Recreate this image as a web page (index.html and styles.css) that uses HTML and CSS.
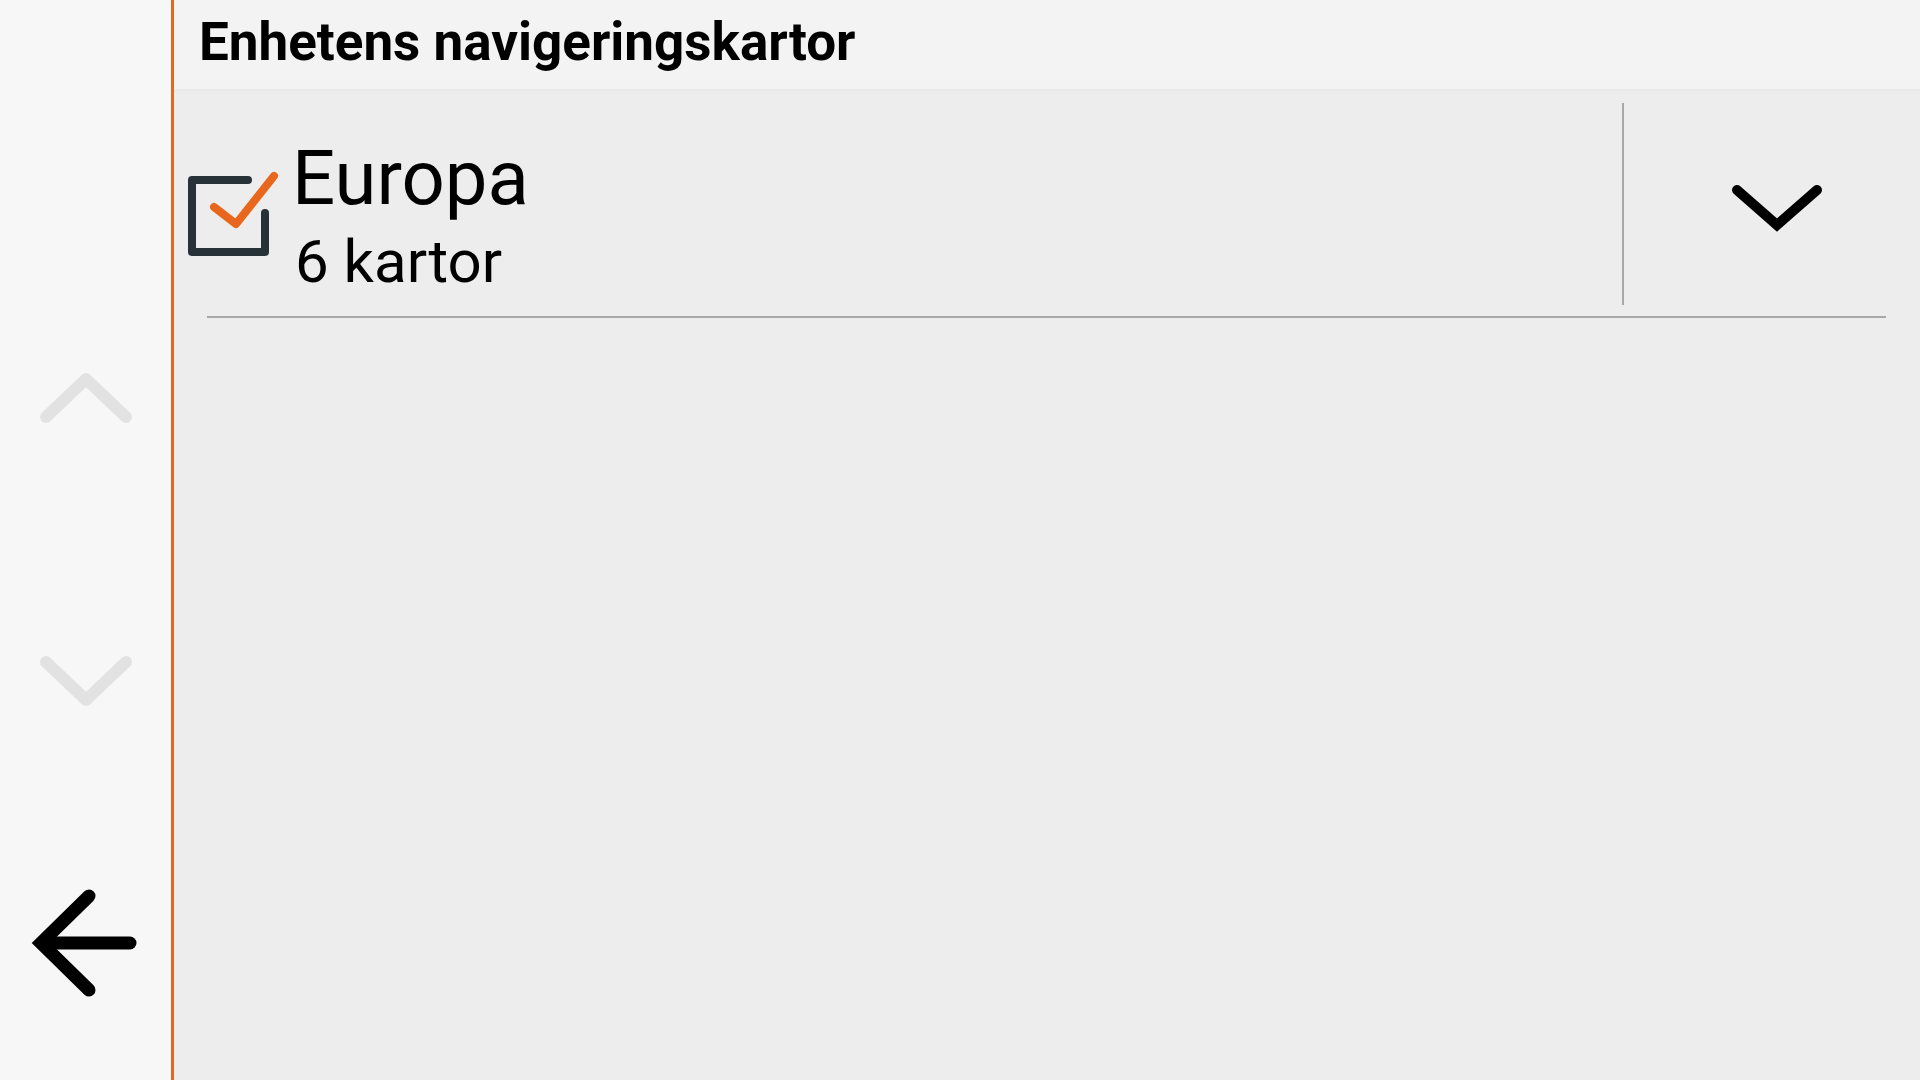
FILE: index.html
```html
<!DOCTYPE html>
<html lang="sv">
<head>
  <meta charset="UTF-8">
  <title>Enhetens navigeringskartor</title>
  <link rel="stylesheet" href="styles.css">
</head>
<body>

<div class="sidebar">
  <div class="side-btn up">
    <svg width="110" height="70" viewBox="0 0 110 70">
      <polyline points="15,54 55,16 95,54" fill="none" stroke="#e2e2e2" stroke-width="12" stroke-linecap="round" stroke-linejoin="round"/>
    </svg>
  </div>
  <div class="side-btn down">
    <svg width="110" height="70" viewBox="0 0 110 70">
      <polyline points="15,16 55,54 95,16" fill="none" stroke="#e2e2e2" stroke-width="12" stroke-linecap="round" stroke-linejoin="round"/>
    </svg>
  </div>
  <div class="side-btn back">
    <svg width="120" height="120" viewBox="0 0 120 120">
      <polyline points="63,12 15,59 63,106" fill="none" stroke="#000" stroke-width="13" stroke-linecap="round" stroke-linejoin="miter"/>
      <line x1="18" y1="59" x2="104" y2="59" stroke="#000" stroke-width="13" stroke-linecap="round"/>
    </svg>
  </div>
</div>

<div class="main">
  <div class="header">Enhetens navigeringskartor</div>

  <div class="list">
    <div class="row">
      <svg class="check" width="94" height="94" viewBox="0 0 94 94">
        <polyline points="61,11 5,11 5,83 78,83 78,44" fill="none" stroke="#263238" stroke-width="8" stroke-linecap="round" stroke-linejoin="round"/>
        <polyline points="27,38 49,55 87,7" fill="none" stroke="#e8671c" stroke-width="8" stroke-linecap="round" stroke-linejoin="round"/>
      </svg>
      <div class="texts">
        <div class="name">Europa</div>
        <div class="count">6 kartor</div>
      </div>
      <div class="divider"></div>
      <div class="expand">
        <svg width="100" height="66" viewBox="0 0 100 66">
          <polyline points="10,12 50,47 90,12" fill="none" stroke="#000" stroke-width="10" stroke-linecap="round" stroke-linejoin="miter"/>
        </svg>
      </div>
    </div>
    <div class="row-line"></div>
  </div>
</div>

</body>
</html>
```

FILE: styles.css
```css
body {
  margin: 0;
  padding: 0;
  display: flex;
  height: 100vh;
  overflow: hidden;
  font-family: Roboto, "Noto Sans", sans-serif;
  color: #000;
  background: #ededed;
}

.sidebar {
  width: 171px;
  flex-shrink: 0;
  background: #f7f7f7;
  border-right: 3px solid #e4681f;
  display: flex;
  flex-direction: column;
  align-items: center;
}

.side-btn {
  width: 100%;
  height: 120px;
  display: flex;
  justify-content: center;
  align-items: center;
}

.side-btn.up {
  margin-top: 338px;
}

.side-btn.down {
  margin-top: 163px;
}

.side-btn.back {
  margin-top: 143px;
}

.main {
  flex: 1;
  display: flex;
  flex-direction: column;
  background: #ededed;
}

.header {
  height: 89px;
  line-height: 84px;
  padding-left: 25px;
  background: #f3f3f3;
  font-size: 53px;
  font-weight: bold;
  color: #000;
  box-shadow: 0 2px 4px rgba(0,0,0,0.025);
}

.row {
  display: flex;
  height: 227px;
  padding-left: 13px;
}

.check {
  margin-top: 80px;
  flex-shrink: 0;
}

.texts {
  flex: 1;
  margin-left: 11px;
  padding-top: 49px;
}

.name {
  font-size: 76px;
  line-height: 80px;
}

.count {
  font-size: 60px;
  line-height: 64px;
  margin-top: 12px;
  margin-left: 3px;
}

.divider {
  width: 2px;
  margin: 14px 0 11px 0;
  background: #a8a8a8;
}

.expand {
  width: 296px;
  padding-left: 10px;
  display: flex;
  justify-content: center;
  align-items: center;
  padding-top: 17px;
  box-sizing: border-box;
}

.row-line {
  height: 2px;
  margin: 0 34px 0 33px;
  background: #a8a8a8;
}
```
